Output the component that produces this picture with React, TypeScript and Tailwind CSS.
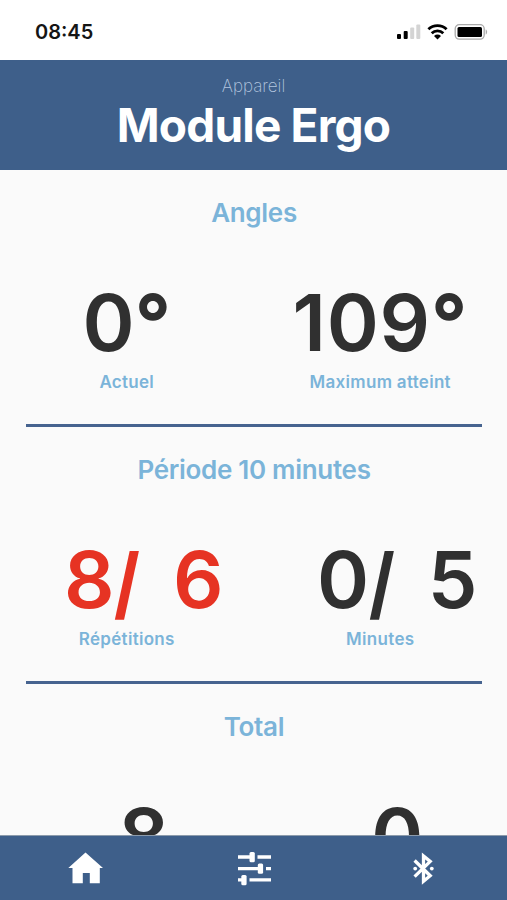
import React from "react";

type Value = { text: string; unit?: string; goal?: string; label?: string; className: string };
type Group = { title: string; values: Value[] };

const groups: Group[] = [
  {
    title: "Angles",
    values: [
      { text: "0", unit: "°", label: "Actuel", className: "text-[#303030]" },
      { text: "109", unit: "°", label: "Maximum atteint", className: "text-[#303030] tracking-[0.8px]" },
    ],
  },
  {
    title: "Période 10 minutes",
    values: [
      { text: "8", goal: "6", label: "Répétitions", className: "text-[#e63323] pl-[34px] [word-spacing:14px]" },
      { text: "0", goal: "5", label: "Minutes", className: "text-[#303030] pl-[34px] [word-spacing:14px]" },
    ],
  },
  {
    title: "Total",
    values: [
      { text: "8", className: "text-[#303030] pl-[34px]" },
      { text: "0", className: "text-[#303030] pl-[34px]" },
    ],
  },
];

const StatusBar = () => (
  <div className="h-[60px] shrink-0 bg-white flex items-center justify-between pl-[35px] pr-[19px] pt-1">
    <span className="text-[20px] leading-6 font-semibold text-[#151515]">08:45</span>
    <svg width="91" height="18" viewBox="0 0 91 18">
      {/* Signal */}
      <rect x="0" y="11" width="4" height="5" rx="1" fill="#000" />
      <rect x="6.7" y="8" width="4" height="8" rx="1" fill="#000" />
      <rect x="13.2" y="4.5" width="4" height="11.5" rx="1" fill="#d4d4d4" />
      <rect x="19.3" y="1.5" width="4" height="14.5" rx="1" fill="#d4d4d4" />
      {/* Wifi */}
      <g fill="none" stroke="#000" strokeWidth="2.8">
        <path d="M31.4 6.3a13 13 0 0 1 18.2 0" />
        <path d="M34.7 10.2a8.3 8.3 0 0 1 11.6 0" />
      </g>
      <path d="M37 13a5.1 5.1 0 0 1 7 0L40.5 16.4z" fill="#000" />
      {/* Battery */}
      <rect x="58.2" y="1.7" width="29" height="14.4" rx="4" fill="none" stroke="#aaa" strokeWidth="1.3" />
      <rect x="60.5" y="4" width="24.5" height="10" rx="1.5" fill="#000" />
      <path d="M88.7 6.5c1.9.6 1.9 4.4 0 5z" fill="#aaa" />
    </svg>
  </div>
);

const TabBar = () => (
  <nav className="h-[65px] shrink-0 bg-[#3e5f8a] border-t border-[#8c9bab] grid grid-cols-3 justify-items-center pt-[13px] text-white">
    <svg width="40" height="40" viewBox="0 0 40 40" fill="currentColor">
      <path d="M20.5 3.5 38 19h-3.2v15.3h-10V24h-7v10.3H7.5V19H3.3z" />
    </svg>
    <svg width="40" height="40" viewBox="0 0 40 40" fill="currentColor">
      <path d="M4 6.3h12v3.4H4zM23.5 6.3H37v3.4H23.5zM4 17.9h20v3.4H4zM32 17.9h5v3.4h-5zM4 29.2h5v3.4H4zM15.5 29.2H37v3.4H15.5z" />
      <rect x="15.5" y="3" width="5.3" height="10.3" rx="1.5" />
      <rect x="23.8" y="14.5" width="5.3" height="10.3" rx="1.5" />
      <rect x="7.3" y="26" width="5.3" height="10.3" rx="1.5" />
    </svg>
    <svg width="40" height="40" viewBox="0 0 40 40">
      <path
        d="m11.6 11.5 15.6 15.2-6.7 5.500V6.900l6.700 5.500-15.600 15.200"
        fill="none"
        stroke="currentColor"
        strokeWidth="3.3"
      />
      <circle cx="12.2" cy="19.6" r="1.9" fill="currentColor" />
      <circle cx="28.8" cy="19.6" r="1.9" fill="currentColor" />
    </svg>
  </nav>
);

const App: React.FC = () => {
  return (
    <div className="h-[900px] w-full overflow-hidden flex flex-col bg-[#fafafa] font-['Inter',sans-serif]">
      <StatusBar />

      <header className="h-[110px] shrink-0 bg-[#3e5f8a] text-center pt-[15px]">
        <p className="text-[17px] leading-[22px] font-extralight text-[#b3c6df]">Appareil</p>
        <h1 className="text-[46px] leading-[56px] font-bold tracking-[-0.8px] text-white">Module Ergo</h1>
      </header>

      {/* Measurements */}
      <main className="flex-1 min-h-0 overflow-hidden">
        {groups.map((group) => (
          <section key={group.title} className="h-[257px] ml-[26px] mr-[25px] border-b-[3px] border-[#46638f] pt-[27px]">
            <h2 className="text-[26px] leading-8 font-semibold tracking-[-0.3px] text-center text-[#7bb4d9]">{group.title}</h2>
            <div className="-ml-[26px] -mr-[25px] mt-[45px] grid grid-cols-2 text-center">
              {group.values.map((value, i) => (
                <div key={i}>
                  <p className={`text-[79px] leading-[96px] font-semibold whitespace-nowrap ${value.className}`}>
                    {value.text}
                    {value.unit && <span className="font-bold">{value.unit}</span>}
                    {value.goal && (
                      <>
                        <span className="inline-block -mx-[3.5px] translate-y-[3px] scale-x-80 font-extrabold">/</span> {value.goal}
                      </>
                    )}
                  </p>
                  {value.label && (
                    <p className="text-[17px] leading-[22px] pt-px font-semibold tracking-[0.3px] text-[#7bb4d9]">{value.label}</p>
                  )}
                </div>
              ))}
            </div>
          </section>
        ))}
      </main>

      <TabBar />
    </div>
  );
};

export default App;
